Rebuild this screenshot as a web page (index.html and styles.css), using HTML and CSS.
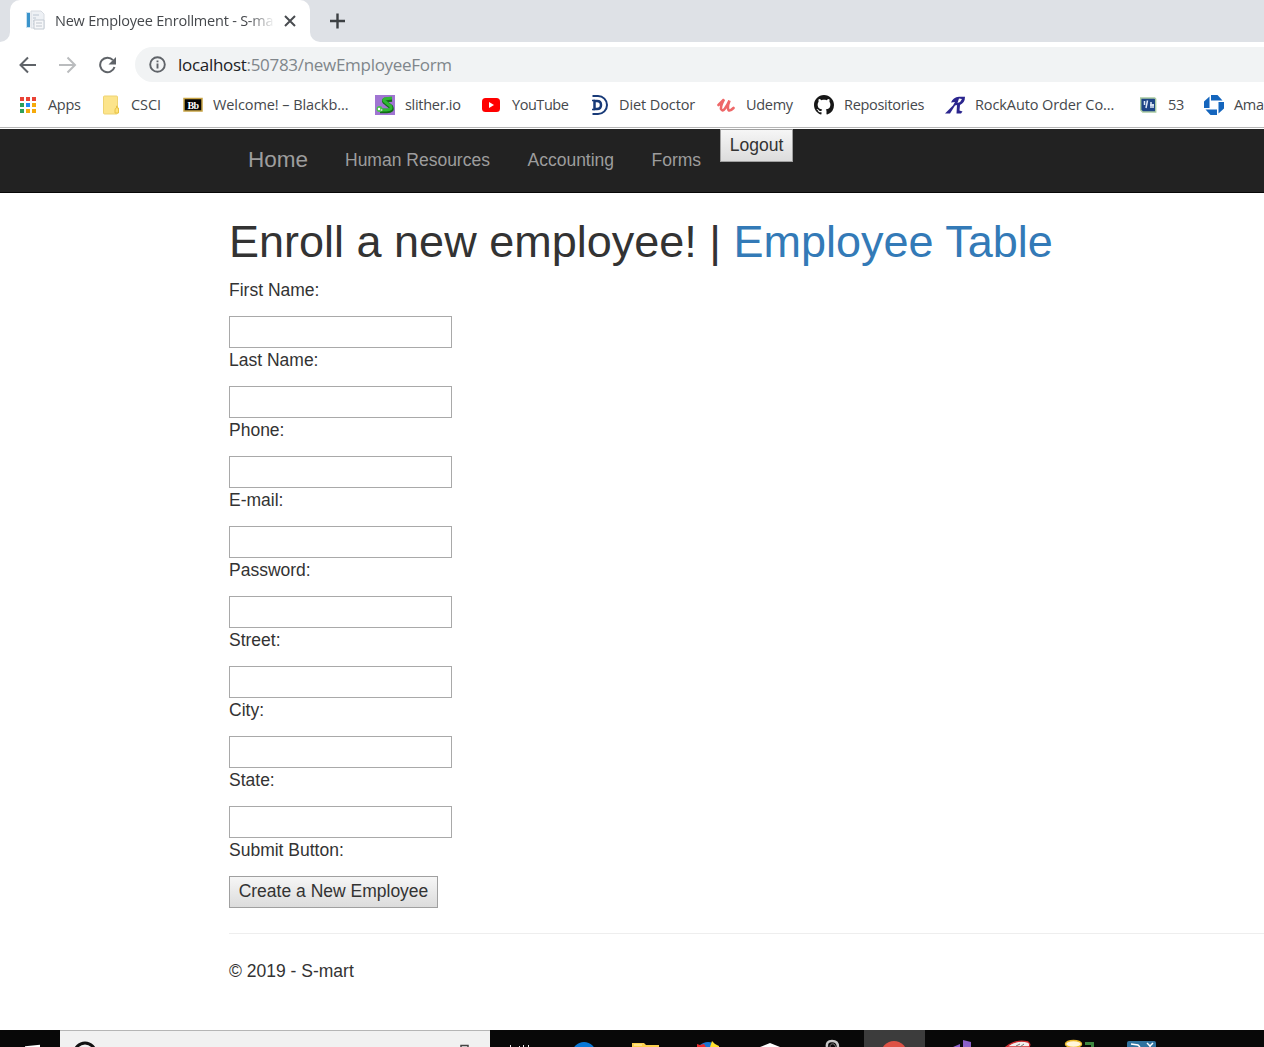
FILE: index.html
```html
<!DOCTYPE html>
<html lang="en">
<head>
<meta charset="utf-8">
<title>New Employee Enrollment - S-mart</title>
<link rel="stylesheet" href="styles.css">
</head>
<body>
<div class="tabs">
  <div class="tab-edge left"></div>
  <div class="tab">
    <svg class="favicon" width="22" height="22" viewBox="0 0 22 22"><path d="M1 2h4v16H1z" fill="#c9e2f2"/><path d="M2 3h3v14H2z" fill="#3b94cb"/><path d="M6 1h10l3 3v14H6z" fill="#eef1f5" stroke="#d8dce2"/><path d="M8 5h6M8 8h3M8 11h3M8 14h3" stroke="#bcc6d2"/><path d="M9 10h10v9H9z" fill="#f6f7f9" stroke="#c3cad2"/><path d="M11 13h6M11 16h6" stroke="#c0c6ce"/></svg>
    <span class="tab-title">New Employee Enrollment - S-ma</span>
    <svg class="close" width="12" height="12" viewBox="0 0 12 12"><path d="M1 1l10 10M11 1L1 11" stroke="#494c50" stroke-width="2"/></svg>
  </div>
  <div class="tab-edge right"></div>
  <svg class="plus" width="16" height="16" viewBox="0 0 16 16"><path d="M8.500 .5v15M1 8h15" stroke="#3c4043" stroke-width="2.400"/></svg>
</div>
<div class="toolbar">
  <svg width="18" height="18" viewBox="0 0 18 18"><path d="M17 9H2M9 1.500L1.500 9 9 16.500" fill="none" stroke="#5f6368" stroke-width="2"/></svg>
  <svg width="18" height="18" viewBox="0 0 18 18"><path d="M0 9h15M8.500 1.500L16 9 8.500 16.500" fill="none" stroke="#babcbe" stroke-width="2"/></svg>
  <svg width="19" height="18" viewBox="0 0 19 18"><path d="M14 4.200A7.300 7.300 0 1 0 15.500 11" fill="none" stroke="#5f6368" stroke-width="2"/><path d="M17 1v7.500H9.500z" fill="#5f6368"/></svg>
  <div class="address">
    <svg width="17" height="17" viewBox="0 0 17 17"><circle cx="8.500" cy="8.500" r="7.300" fill="none" stroke="#5f6368" stroke-width="1.900"/><path d="M8.500 7.500v5M8.500 4.400v1.900" stroke="#5f6368" stroke-width="1.900"/></svg>
    <span class="url"><b>localhost</b>:50783/newEmployeeForm</span>
  </div>
</div>
<div class="bookmarks">
  <div class="bm apps"><svg width="18" height="18" viewBox="0 0 18 18"><path d="M1 1h4v4H1zM7 1h4v4H7zM13 1h4v4h-4z" fill="#ea4335"/><path d="M1 7h4v4H1zM1 13h4v4H1z" fill="#2da05a"/><path d="M7 7h4v4H7z" fill="#2389f5"/><path d="M7 13h4v4H7zM13 7h4v4h-4zM13 13h4v4h-4z" fill="#f6aa0b"/></svg><span>Apps</span></div>
  <div class="bm csci"><svg width="17" height="20" viewBox="0 0 17 20"><path d="M.5 2q0-1 1-1h12q1 0 1 1v16q0 1-1 1h-12q-1 0-1-1z" fill="#fce48b" stroke="#eed372"/><path d="M12 18v-3q0-2 1.500-2V11h.7v2h1.300v5z" fill="#ffe17a" stroke="#e7c345"/></svg><span>CSCI</span></div>
  <div class="bm bb"><svg width="20" height="16" viewBox="0 0 20 16"><path d="M1 1.500h18v12.500H1z" fill="#050505" stroke="#c8a445" stroke-width="1.500"/><text x="10" y="11.500" text-anchor="middle" class="bb-text">Bb</text></svg><span>Welcome! – Blackb...</span></div>
  <div class="bm slither"><svg width="20" height="20" viewBox="0 0 20 20"><path d="M0 0h20v20H0z" fill="#a075d2"/><path d="M17 4.500L10 5q-2 1 1 3l5 4q2 4-4 4H5" fill="none" stroke="#126b16" stroke-width="4.500"/><path d="M17 3L9.500 4q-2 1 1 3l5 4q2 4-4 4H5" fill="none" stroke="#2fb832" stroke-width="3"/><circle cx="4.500" cy="14" r="3" fill="#48c649"/><circle cx="4" cy="14" r="1.200" fill="#fff"/><circle cx="6.500" cy="15" r="1" fill="#ccc"/></svg><span>slither.io</span></div>
  <div class="bm yt"><svg width="18" height="14" viewBox="0 0 18 14"><rect width="18" height="14" rx="3.500" fill="#f00"/><path d="M7 4l5 3-5 3z" fill="#fff"/></svg><span>YouTube</span></div>
  <div class="bm diet"><svg width="18" height="20" viewBox="0 0 18 20"><path d="M1.500 1H7a9 9 0 0 1 0 18H1.500" fill="none" stroke="#183a78" stroke-width="2"/><path d="M3.500 6H6q4 0 4 4t-4 4H3.500z" fill="none" stroke="#183a78" stroke-width="2.500"/><path d="M1 5.500h3M1 14.500h3" stroke="#183a78" stroke-width="1.500"/></svg><span>Diet Doctor</span></div>
  <div class="bm udemy"><svg width="19" height="16" viewBox="0 0 19 16"><path d="M1.500 8Q5.500 4 7 2.500 3.500 9 4 12q1.500 3 4-.5Q11 7 12.500 3.500 10 10 11.500 13q1.500 1.500 5-2" fill="none" stroke="#ee6768" stroke-width="2.600" stroke-linecap="round"/></svg><span>Udemy</span></div>
  <div class="bm github"><svg width="20" height="20" viewBox="0 0 16 16"><path fill="#171717" d="M8 0C3.580 0 0 3.580 0 8c0 3.540 2.290 6.530 5.470 7.590.4.070.55-.17.55-.38 0-.19-.01-.82-.01-1.490-2.010.37-2.530-.49-2.690-.94-.09-.23-.48-.94-.82-1.130-.28-.15-.68-.52-.01-.53.63-.01 1.080.58 1.230.82.72 1.210 1.870.87 2.330.66.07-.52.28-.87.51-1.070-1.780-.2-3.640-.89-3.640-3.950 0-.87.31-1.590.82-2.150-.08-.2-.36-1.020.08-2.120 0 0 .67-.21 2.200.82.64-.18 1.320-.27 2-.27s1.360.09 2 .27c1.530-1.040 2.200-.82 2.200-.82.44 1.100.16 1.920.08 2.120.51.56.82 1.270.82 2.150 0 3.070-1.870 3.750-3.650 3.950.29.25.54.73.54 1.480 0 1.070-.01 1.930-.01 2.200 0 .21.15.46.55.38A8.010 8.010 0 0 0 16 8c0-4.420-3.580-8-8-8z"/></svg><span>Repositories</span></div>
  <div class="bm rock"><svg width="20" height="18" viewBox="0 0 20 18"><path d="M0 17.500L8 9.500l2-3.500-4 .5Q8 1.500 14 .8h6q0 6-5 8.200l-.5 5.500 3 1-1.500 2h-4.500L12 9l-2 .5-5 8zM12.500 7Q16 6 17 3l-3-.5z" fill="#2b258e" fill-rule="evenodd"/></svg><span>RockAuto Order Co...</span></div>
  <div class="bm sqft"><svg width="17" height="16" viewBox="0 0 17 16"><path d="M.7 1h14l1 1v13h-13l-2-2z" fill="#1e4586" stroke="#a9caa2" stroke-width="1.400"/><path d="M4.500 4v4M7.500 3.500L6 11M11 5v6M13 7v4M10 8h4" stroke="#dfe9f8" stroke-width="1.500"/></svg><span>53</span></div>
  <div class="bm chase"><svg width="20" height="20" viewBox="0 0 20 20"><g fill="#1465bd"><path d="M7 0h6.500l5 5.500H7z"/><path d="M20 7v6.500l-5.500 5V7z"/><path d="M13 20H6.500l-5-5.500H13z"/><path d="M0 13V6.500l5.500-5V13z"/></g></svg><span>Ama</span></div>
</div>
<nav class="navbar">
  <a class="brand">Home</a><a class="hr-link">Human Resources</a><a class="acct">Accounting</a><a class="forms">Forms</a><button class="logout">Logout</button>
</nav>
<main class="content">
  <h1>Enroll a new employee! | <a>Employee Table</a></h1>
  <form>
    <label>First Name:</label><input>
    <label>Last Name:</label><input>
    <label>Phone:</label><input>
    <label>E-mail:</label><input>
    <label>Password:</label><input type="password">
    <label>Street:</label><input>
    <label>City:</label><input>
    <label>State:</label><input>
    <label>Submit Button:</label><button type="button" class="create">Create a New Employee</button>
  </form>
  <footer>© 2019 - S-mart</footer>
</main>
<div class="taskbar">
  <div class="start"><svg width="60" height="17"><path d="M25 16.300l15-1.600V17H25z" fill="#fff"/></svg></div>
  <div class="search"><svg width="430" height="16"><circle cx="25" cy="22.500" r="10.500" fill="none" stroke="#111" stroke-width="3"/><path d="M401 16v-1.500h7V16" fill="none" stroke="#444" stroke-width="1.500"/></svg></div>
  <svg class="dock" width="774" height="17" viewBox="490 0 774 17">
    <path d="M864 0h61v17h-61z" fill="#3c3c3c"/>
    <path d="M510.500 15v2M519.500 16v1M523.500 15v2M528.500 15v2" stroke="#eee"/>
    <circle cx="584" cy="24" r="12" fill="#0878d7"/>
    <path d="M632 13h12l2 2h13v2h-27z" fill="#fbd04e"/><path d="M634 15h8" stroke="#fff2bd"/>
    <circle cx="708" cy="24" r="12" fill="#1775d3"/><path d="M697 14l3 1 4-1 2 3h-9z" fill="#e82b2c"/><path d="M710 17l2-6 3 3 4 2v1z" fill="#ffe12c"/>
    <path d="M760 17l10-4 10 4z" fill="#fff"/>
    <path d="M827 17q-1-6 5-6t6 6" fill="none" stroke="#c8c8c8" stroke-width="2.500"/><path d="M830 17q0-4 4-3l2 3" fill="none" stroke="#777"/>
    <circle cx="894" cy="24" r="13" fill="#de5145"/>
    <path d="M953 17l7-3v3zM963 10l8 2v5h-8z" fill="#8b61c9"/>
    <path d="M1006 17q10-8 22-5 3 2 1 5z" fill="#f1efed" stroke="#cf2c2f" stroke-width="1.300"/><path d="M1016 16l4-2M1020 17l4-3" stroke="#777"/>
    <ellipse cx="1073.500" cy="14" rx="8" ry="3.500" fill="#fff6dc" stroke="#edbd2f" stroke-width="1.500"/><path d="M1085 12h9v5h-3v-2h-6z" fill="#3e8840"/>
    <path d="M1127 17v-4q0-2 2-2h25q2 0 2 2v4z" fill="#30739f"/><path d="M1131 14l7 1 2 2M1147 13l3 3 3-3M1150 16v1" fill="none" stroke="#fff" stroke-width="1.500"/>
  </svg>
</div>
</body>
</html>
```
FILE: styles.css
```css
* { box-sizing: border-box; }
body { margin: 0; width: 1264px; height: 1047px; overflow: hidden; display: flex; flex-direction: column; background: #fff; color: #333; font: 17.5px/25px "Liberation Sans", Arial, sans-serif; }
svg { display: block; flex: none; }
.tabs, .toolbar, .bookmarks, .tab-title { font-family: "Open Sans", "Noto Sans", sans-serif; white-space: nowrap; }
.tabs { height: 42px; flex: none; display: flex; align-items: center; background: #dee1e6; }
.tab { width: 300px; height: 42px; padding-left: 15px; display: flex; align-items: center; background: #fff; border-radius: 10px 10px 0 0; }
.favicon { margin-right: 8px; }
.tab-title { width: 221px; padding-bottom: 2px; font-size: 14.5px; letter-spacing: -.22px; color: #45484c; -webkit-mask-image: linear-gradient(90deg, #000 193px, transparent 220px); mask-image: linear-gradient(90deg, #000 193px, transparent 220px); }
.close { margin-left: 8px; }
.tab-edge { width: 10px; height: 42px; background: #fff; }
.tab-edge::before { content: ""; display: block; height: 42px; background: #dee1e6; }
.left::before { border-bottom-right-radius: 10px; }
.right::before { border-bottom-left-radius: 10px; }
.plus { margin-left: 9px; }
.toolbar { height: 45px; flex: none; display: flex; align-items: center; padding-left: 19px; gap: 22px; }
.address { margin-left: -5px; flex: 1; height: 35px; padding-left: 14px; display: flex; align-items: center; gap: 12px; background: #f1f3f4; border-radius: 18px 0 0 18px; }
.url { font-size: 17px; letter-spacing: -.3px; color: #80868b; }
.url b { font-weight: 400; color: #202124; }
.bookmarks { height: 42px; flex: none; display: flex; padding-left: 19px; border-bottom: 1px solid #fff; box-shadow: inset 0 -1px #b6b6b6; font-size: 14.5px; letter-spacing: -.3px; color: #45484c; }
.bm { flex: none; height: 36px; display: flex; align-items: center; }
.bm span { padding-bottom: 2px; }
.apps { width: 84px; gap: 11px; }
.csci { width: 80px; gap: 11px; letter-spacing: -.1px; }
.bb { width: 192px; gap: 10px; letter-spacing: -.08px; }
.slither { width: 107px; gap: 10px; }
.yt { width: 109px; gap: 12px; letter-spacing: -.45px; }
.diet { width: 126px; gap: 10px; letter-spacing: -.1px; }
.udemy { width: 97px; gap: 10px; }
.github { width: 131px; gap: 10px; }
.rock { width: 195px; gap: 10px; letter-spacing: -.1px; }
.sqft { width: 64px; gap: 11px; }
.chase { gap: 10px; }
.bb-text { font: bold 10px "Liberation Serif", serif; fill: #fff; letter-spacing: -.5px; }
.navbar { height: 64px; flex: none; display: flex; padding-left: 248px; background: #222; border-bottom: 1px solid #080808; color: #9d9d9d; line-height: 62px; white-space: nowrap; }
.brand { width: 97px; font-size: 22.5px; }
.hr-link { width: 182.500px; }
.acct { width: 124px; }
.forms { width: 68.500px; }
button { height: 32px; padding: 0 0 2px; border: 1px solid #a0a0a0; background: linear-gradient(#f6f6f6, #dcdcdc); color: #333; font: inherit; line-height: 28px; }
.logout { width: 73px; height: 33px; }
.content { flex: 1; padding: 24px 0 0 229px; }
h1 { margin: 0 0 11px; font-size: 45px; line-height: 50px; font-weight: 400; white-space: nowrap; }
h1 a { color: #337ab7; }
form { display: grid; grid-auto-rows: 25px 45px; justify-items: start; }
label { height: 25px; }
input { width: 223px; height: 32px; margin-top: 13px; border: 1px solid #a9a9a9; background: #fff; font: inherit; }
.create { width: 209px; margin-top: 13px; }
footer { margin-top: 25px; padding-top: 25px; border-top: 1px solid #eee; }
.taskbar { height: 17px; flex: none; display: flex; background: #080808; overflow: hidden; }
.start { width: 60px; }
.search { width: 430px; background: #f1f1f1; border-top: 1px solid #b5b5b5; }
```
